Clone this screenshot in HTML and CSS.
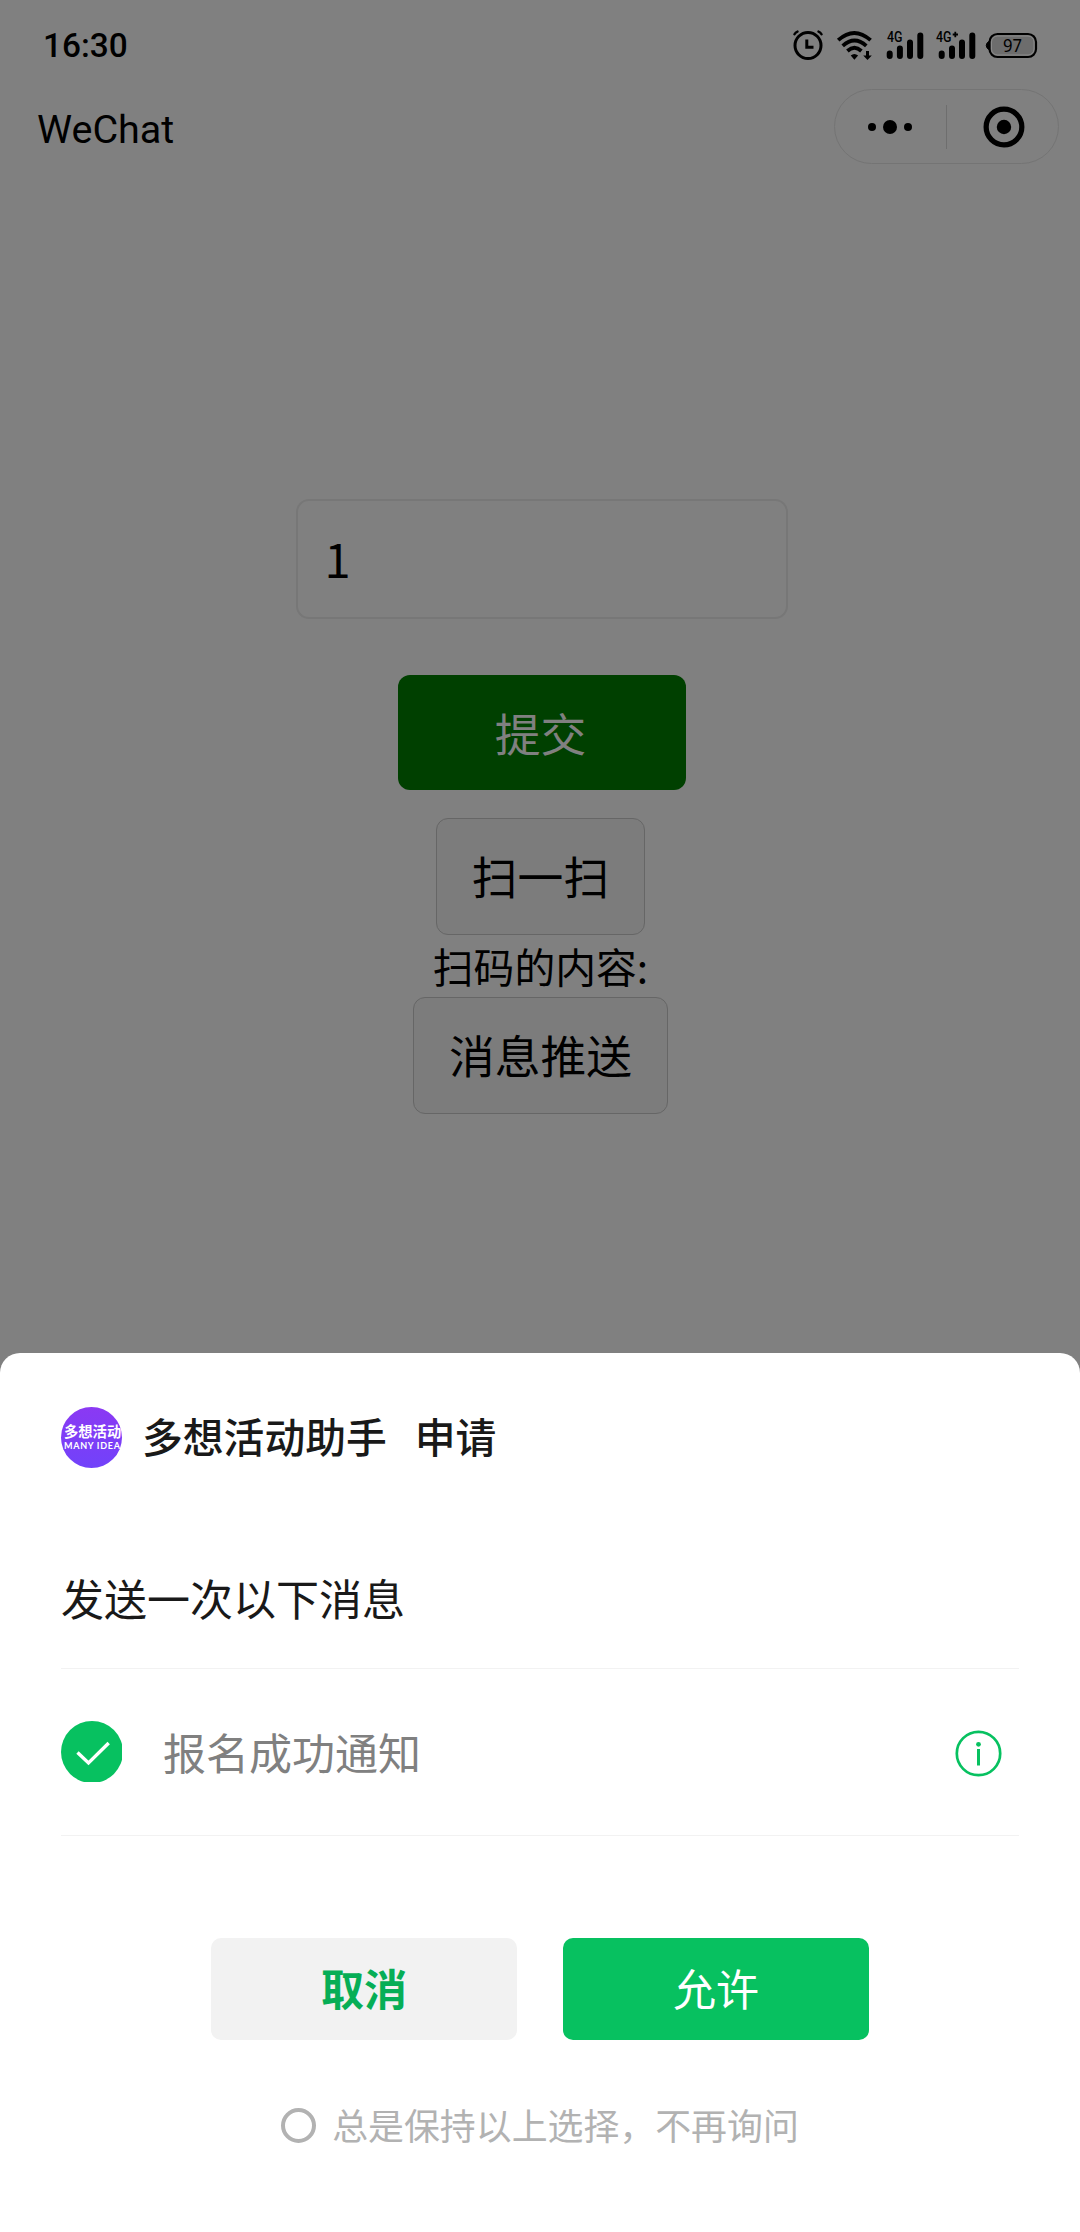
FILE: index.html
```html
<!DOCTYPE html>
<html lang="zh-CN">
<head>
<meta charset="utf-8">
<title>WeChat</title>
<link rel="stylesheet" href="styles.css">
</head>
<body>
<div class="screen">
  <header class="status">
    <span class="clock">16:30</span>
    <svg class="status-icons" width="246" height="32" viewBox="0 0 246 32">
      <g fill="none" stroke="#000" stroke-linecap="round">
        <circle cx="15" cy="15.500" r="13" stroke-width="3"/>
        <path d="M13.800 9.500v7.700h6.700" stroke-width="3" stroke-linecap="butt"/>
        <path d="M1.500 4.300q1-2 3-2.700M28.500 4.300q-1-2-3-2.700" stroke-width="2.400"/>
        <g stroke-width="3.800" stroke-linecap="butt">
          <path d="M45.200 10.200q16-14.500 32.400 0"/>
          <path d="M49.700 15.800q11.800-10.600 23.600 0"/>
          <path d="M54.400 21q7-6.300 14 0"/>
        </g>
      </g>
      <path d="M57.700 25.500q3.600-3 7.400 0l-3.700 4.300zM73 21h3v4.500h2.800l-4.300 4.500-4.300-4.500H73z"/>
      <text class="net" x="94" y="11.500" textLength="15.500" lengthAdjust="spacingAndGlyphs">4G</text>
      <g stroke="#000" stroke-width="6" stroke-linecap="round">
        <path d="M96.700 23.500v2.500M106.900 18.500v7.500M117 12.500v13.500M127.300 5.500v20.500"/>
        <path d="M148.700 23.500v2.500M159 18.500v7.500M169 12.500v13.500M179.300 5.500v20.500"/>
      </g>
      <text class="net" x="143" y="11.500" textLength="15.500" lengthAdjust="spacingAndGlyphs">4G</text>
      <path d="M159.700 4.500h5.300M162.300 1.800v5.400" stroke="#000" stroke-width="1.800"/>
      <rect x="196.500" y="4" width="46.500" height="23" rx="8" fill="#6d6d6d" stroke="#000" stroke-width="2.200"/>
      <rect x="198.500" y="6" width="42.500" height="19" rx="6" fill="none" stroke="#8c8c8c" stroke-width="1"/>
      <path d="M195.500 11.500q-4.500 4 0 8z" stroke="#000"/>
      <text class="level" x="219.500" y="21.500" text-anchor="middle" textLength="19" lengthAdjust="spacingAndGlyphs">97</text>
    </svg>
  </header>
  <nav class="navbar">
    <h1 class="nav-title">WeChat</h1>
    <div class="capsule">
      <svg width="111" height="44" viewBox="0 0 111 44"><circle cx="37" cy="22" r="4"/><circle cx="55" cy="22" r="7"/><circle cx="73" cy="22" r="4"/></svg>
      <svg class="capsule-close" width="111" height="44" viewBox="0 0 111 44"><circle cx="57.500" cy="22" r="18" fill="none" stroke="#000" stroke-width="5.300"/><circle cx="57.500" cy="22" r="7.300"/></svg>
    </div>
  </nav>
  <main class="form">
    <div class="field">1</div>
    <button class="btn submit">提交</button>
    <button class="btn scan">扫一扫</button>
    <p class="result">扫码的内容:</p>
    <button class="btn push">消息推送</button>
  </main>
  <section class="sheet">
    <div class="app">
      <div class="avatar"><span class="avatar-cn">多想活动</span><span class="avatar-en">MANY IDEA</span></div>
      <span class="app-name">多想活动助手</span>
      <span class="app-action">申请</span>
    </div>
    <h2 class="heading">发送一次以下消息</h2>
    <div class="option">
      <svg class="check" width="61" height="61" viewBox="0 0 61 61"><circle cx="31" cy="31" r="31" fill="#07c160"/><path d="M16.500 31.500l11 10.500 20.200-20" fill="none" stroke="#fff" stroke-width="3.400"/></svg>
      <span class="option-name">报名成功通知</span>
      <svg class="info" width="47" height="47" viewBox="0 0 47 47"><circle cx="23.500" cy="23.500" r="21.700" fill="none" stroke="#07c160" stroke-width="2.700"/><circle cx="23.500" cy="14.300" r="2.400" fill="#07c160"/><path d="M23.500 19v16.500" stroke="#07c160" stroke-width="3"/></svg>
    </div>
    <div class="actions">
      <button class="action cancel">取消</button>
      <button class="action allow">允许</button>
    </div>
    <label class="remember"><span class="ring"></span>总是保持以上选择，不再询问</label>
  </section>
</div>
</body>
</html>
```

FILE: styles.css
```css
* { box-sizing: border-box; }

body {
  margin: 0;
  font-family: "Noto Sans CJK SC", sans-serif;
  background: #808080;
}

.screen {
  display: flex;
  flex-direction: column;
  width: 1080px;
  height: 2232px;
  overflow: hidden;
  color: #000;
}

.status {
  display: flex;
  justify-content: space-between;
  height: 89px;
  padding: 26px 37px 0 43px;
  font-family: Roboto, sans-serif;
}

.clock {
  font-size: 33.4px;
  font-weight: 500;
  line-height: 40px;
}

.status-icons { margin-top: 4px; margin-right: 4px; }
.net { font: 500 14.5px Roboto, sans-serif; }
.level { font: 400 18.5px "Noto Sans", sans-serif; }

.navbar {
  display: flex;
  justify-content: space-between;
  height: 75px;
  padding: 0 21px 0 37px;
}

.nav-title {
  margin: 17px 0 0;
  font: 400 39.5px/48px Roboto, sans-serif;
}

.capsule {
  display: flex;
  align-items: center;
  width: 225px;
  height: 75px;
  border: 1px solid #747474;
  border-radius: 38px;
}

.capsule-close { border-left: 1px solid #6e6e6e; }

.form {
  display: flex;
  flex-direction: column;
  align-items: center;
  height: 1189px;
  padding: 335px 0 0 1px;
}

.field {
  width: 492px;
  height: 120px;
  margin-left: 2px;
  padding-left: 27px;
  border: 2px solid #777;
  border-radius: 13px;
  font-size: 47px;
  line-height: 114px;
}

.btn {
  height: 117px;
  padding: 0;
  border: 1px solid #666;
  border-radius: 12px;
  background: #7c7c7c;
  color: #000;
  font: 400 45.8px/113px "Noto Sans CJK SC", sans-serif;
}

.submit {
  width: 288px;
  height: 115px;
  margin: 56px 0 28px 2px;
  padding-right: 2px;
  border: 0;
  background: #004000;
  color: #808080;
}

.scan,
.push { padding-bottom: 2px; }
.scan { width: 209px; }
.push { width: 255px; }

.result {
  margin: 0;
  font-size: 40.8px;
  line-height: 62px;
}

.sheet {
  height: 879px;
  padding: 54px 61px 0;
  border-radius: 20px 20px 0 0;
  background: #fff;
  color: #191919;
}

.app {
  display: flex;
  align-items: center;
  height: 61px;
  font-size: 40.8px;
  font-weight: 500;
  line-height: 56px;
}

.avatar {
  display: flex;
  flex-direction: column;
  width: 61px;
  height: 61px;
  padding: 16px 0 0 3px;
  border-radius: 50%;
  overflow: hidden;
  background: linear-gradient(#8b39f3, #7142fa);
  color: #fff;
  white-space: nowrap;
}

.avatar-cn { font-size: 14.3px; font-weight: 700; line-height: 16px; }
.avatar-en { font: 700 9px/13px Lato, sans-serif; letter-spacing: .7px; }
.app-name { margin: -3px 0 0 20px; }
.app-action { margin: -3px 0 0 28px; }

.heading {
  margin: 99px 0 0;
  padding-bottom: 41px;
  border-bottom: 1px solid #f2f2f2;
  font-size: 43px;
  font-weight: 400;
  line-height: 60px;
}

.option {
  display: flex;
  align-items: center;
  height: 167px;
  border-bottom: 1px solid #f2f2f2;
  color: #808080;
  font-size: 43px;
  line-height: 60px;
}

.check { margin-top: -2px; }
.option-name { margin: -3px 0 0 41px; }
.info { margin: 3px 17px 0 auto; }

.actions {
  display: flex;
  justify-content: center;
  gap: 46px;
  margin-top: 102px;
}

.action {
  width: 306px;
  height: 102px;
  padding: 0 0 3px;
  border: 0;
  border-radius: 10px;
  font: 400 43px/99px "Noto Sans CJK SC", sans-serif;
}

.cancel { background: #f2f2f2; color: #06ae56; font-weight: 700; }
.allow { background: #07c160; color: #fff; }

.remember {
  display: flex;
  align-items: center;
  justify-content: center;
  margin-top: 59px;
  color: #b2b2b2;
  font-size: 35.9px;
  line-height: 50px;
}

.ring {
  width: 35px;
  height: 35px;
  margin: 2px 16px 0 0;
  border: 4.5px solid #b2b2b2;
  border-radius: 50%;
}
```
